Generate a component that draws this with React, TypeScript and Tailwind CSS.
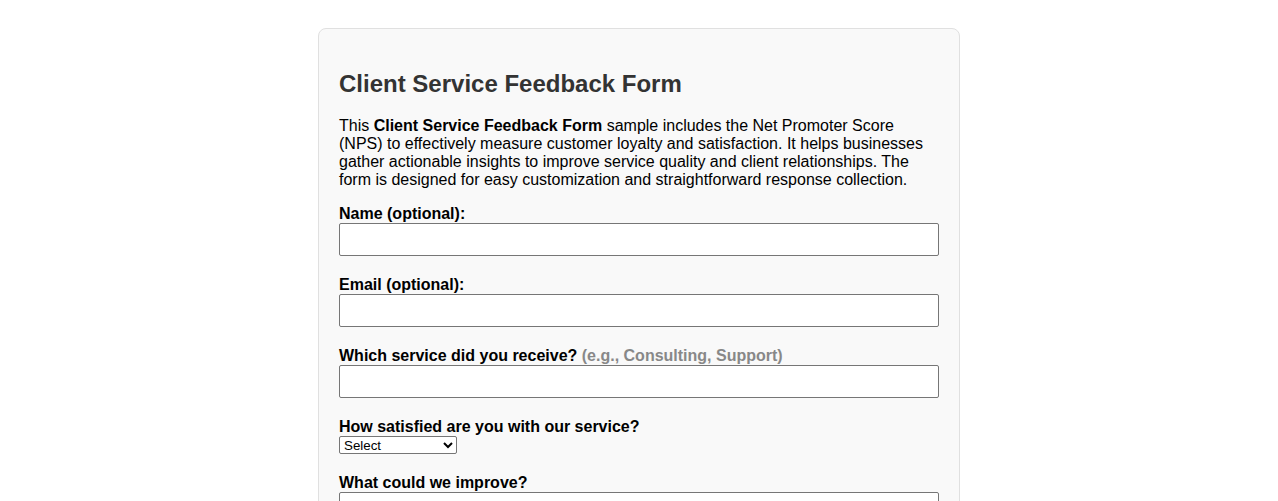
const font = "font-['Liberation_Sans',Arial,sans-serif]";

function Field({
  label,
  hint,
  children,
}: {
  label: string;
  hint?: string;
  children: React.ReactNode;
}) {
  return (
    <div className="mb-5">
      <label className="block text-base font-bold leading-[18px] text-black">
        {label}
        {hint && <span className="text-[#888]"> {hint}</span>}
      </label>
      {children}
    </div>
  );
}

const inputCls =
  "block h-[33px] w-full rounded-[2px] border border-[#767676] bg-white px-2 text-[13.33px] text-black";

export default function App() {
  return (
    <div className={`min-h-screen bg-white ${font}`}>
      <div className="mx-auto mt-[28px] w-[642px] rounded-lg border border-[#e0e0e0] bg-[#f9f9f9] p-5">
        <h2 className="mt-[21px] mb-[19px] text-2xl leading-[28px] font-bold text-[#333]">
          Client Service Feedback Form
        </h2>
        <p className="mb-4 text-base leading-[18px] text-black">
          This <strong>Client Service Feedback Form</strong> sample includes the
          Net Promoter Score (NPS) to effectively measure customer loyalty and
          satisfaction. It helps businesses gather actionable insights to
          improve service quality and client relationships. The form is
          designed for easy customization and straightforward response
          collection.
        </p>
        <form>
          <Field label="Name (optional):">
            <input type="text" className={inputCls} />
          </Field>
          <Field label="Email (optional):">
            <input type="email" className={inputCls} />
          </Field>
          <Field
            label="Which service did you receive?"
            hint="(e.g., Consulting, Support)"
          >
            <input type="text" className={inputCls} />
          </Field>
          <Field label="How satisfied are you with our service?">
            <select className="mb-[2px] block h-[18px] w-[118px] rounded-[2px] border border-[#767676] bg-white text-[13.33px] leading-none text-black">
              <option>Select</option>
              <option>Very satisfied</option>
              <option>Satisfied</option>
              <option>Neutral</option>
              <option>Dissatisfied</option>
              <option>Very dissatisfied</option>
            </select>
          </Field>
          <Field label="What could we improve?">
            <textarea
              rows={4}
              className="block w-full rounded-[2px] border border-[#767676] bg-white p-2 text-[13.33px] text-black"
            />
          </Field>
        </form>
      </div>
    </div>
  );
}
